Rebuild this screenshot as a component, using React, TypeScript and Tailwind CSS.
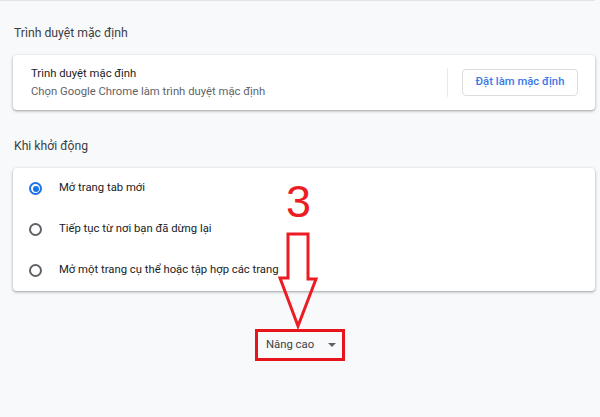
import React from "react";

const startupOptions = [
  { label: "Mở trang tab mới", checked: true },
  { label: "Tiếp tục từ nơi bạn đã dừng lại", checked: false },
  { label: "Mở một trang cụ thể hoặc tập hợp các trang", checked: false },
];

function Radio({ checked }: { checked: boolean }) {
  return checked ? (
    <span className="w-[13px] h-[13px] rounded-full border-2 border-[#1a73e8] flex items-center justify-center">
      <span className="w-[6px] h-[6px] rounded-full bg-[#1a73e8]" />
    </span>
  ) : (
    <span className="w-[13px] h-[13px] rounded-full border-2 border-[#5f6368]" />
  );
}

const cardClass =
  "ml-[13px] mr-[5px] bg-white rounded-[4px] shadow-[0_1px_2px_rgba(60,64,67,0.3),0_1px_3px_1px_rgba(60,64,67,0.15)]";

export default function App() {
  return (
    <div
      className="relative w-[600px] h-[417px] overflow-hidden bg-[#f8f9fa] text-[#202124]"
      style={{ fontFamily: "Roboto, 'Liberation Sans', sans-serif" }}
    >
      {/* edge of the card above */}
      <div className="h-px mr-[5px] bg-[#e3e4e6]" />

      <h2 className="mt-[24px] ml-[14px] text-[12.2px] leading-[16px] text-[#3c4043]">Trình duyệt mặc định</h2>

      <div className={`${cardClass} mt-[14px] h-[55px] flex items-center`}>
        <div className="flex-1 pl-[18px]">
          <p className="text-[11.3px] leading-[16px] text-[#202124]">Trình duyệt mặc định</p>
          <p className="text-[11.3px] leading-[16px] mt-[2px] text-[#5f6368]">
            Chọn Google Chrome làm trình duyệt mặc định
          </p>
        </div>
        <div className="w-px h-[29px] bg-[#e8eaed]" />
        <button className="ml-[14px] mr-[17px] w-[116px] h-[27px] rounded-[4px] border border-[#dadce0] bg-white text-[11.3px] font-medium text-[#3b78e7]">
          Đặt làm mặc định
        </button>
      </div>

      <h2 className="mt-[28px] ml-[14px] text-[12.2px] leading-[16px] text-[#3c4043]">Khi khởi động</h2>

      <div className={`${cardClass} mt-[14px]`}>
        {startupOptions.map((opt) => (
          <div key={opt.label} className="h-[41px] flex items-center pl-[16px]">
            <Radio checked={opt.checked} />
            <span className="ml-[17px] text-[11.3px] text-[#202124]">{opt.label}</span>
          </div>
        ))}
      </div>

      <div className="mt-[38px] flex justify-center">
        <div className="w-[90px] h-[32px] border-[3px] border-[#e8141c] flex items-center justify-between pl-[8px] pr-[6px]">
          <span className="text-[11.3px] text-[#3c4043]">Nâng cao</span>
          <span className="w-0 h-0 border-l-[4px] border-r-[4px] border-t-[4px] border-l-transparent border-r-transparent border-t-[#5f6368]" />
        </div>
      </div>

      {/* annotation: step number and arrow */}
      <span
        className="absolute left-[286px] top-[179px] text-[45px] leading-[45px] text-[#ec1c24]"
        style={{ fontFamily: "'Liberation Sans', Arial, sans-serif" }}
      >
        3
      </span>
      <svg className="absolute left-[275px] top-[230px]" width="46" height="100" viewBox="0 0 46 100">
        <polygon
          points="13,4 33,4 33,49 41,49 23,96 5,48 13,48"
          fill="none"
          stroke="#ec1c24"
          strokeWidth="3"
          strokeLinejoin="miter"
        />
      </svg>
    </div>
  );
}
